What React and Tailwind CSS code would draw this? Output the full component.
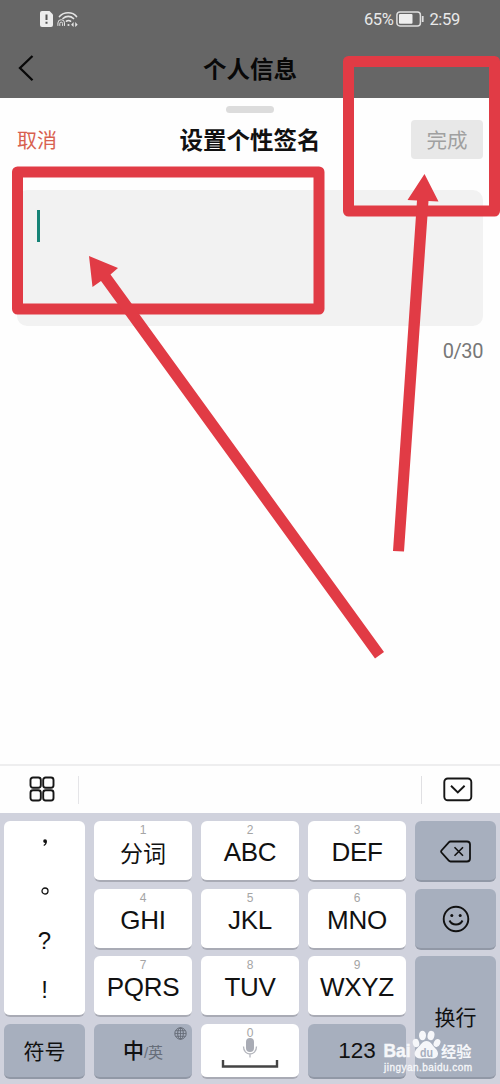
import clsx from "clsx";

const letterKeys = [
  { digit: "1", label: "分词", place: "col-start-2 row-start-1", cjk: true },
  { digit: "2", label: "ABC", place: "col-start-3 row-start-1" },
  { digit: "3", label: "DEF", place: "col-start-4 row-start-1" },
  { digit: "4", label: "GHI", place: "col-start-2 row-start-2" },
  { digit: "5", label: "JKL", place: "col-start-3 row-start-2" },
  { digit: "6", label: "MNO", place: "col-start-4 row-start-2" },
  { digit: "7", label: "PQRS", place: "col-start-2 row-start-3" },
  { digit: "8", label: "TUV", place: "col-start-3 row-start-3" },
  { digit: "9", label: "WXYZ", place: "col-start-4 row-start-3" },
];

function Key({ dark, className, children }) {
  return (
    <button
      className={clsx(
        "rounded-md border-b-2 flex",
        dark ? "bg-[#a7afbe] border-[#9198a6]" : "bg-white border-[#a9abb5]",
        className
      )}
    >
      {children}
    </button>
  );
}

function StatusBar() {
  return (
    <div className="h-[38px] pl-10 pr-10 flex items-center justify-between text-[#e9e9e9]">
      <div className="flex items-center gap-1">
        <svg width="13" height="16" viewBox="0 0 13 16">
          <path d="M2 0h7.5L13 3.5V14a2 2 0 0 1-2 2H2a2 2 0 0 1-2-2V2a2 2 0 0 1 2-2z" fill="#ececec" />
          <path d="M6.5 3.5v5.5M6.5 10.800v2" stroke="#555" strokeWidth="2" />
        </svg>
        <svg width="21" height="17" viewBox="0 0 21 17" fill="none" stroke="#e4e4e4" strokeLinecap="round">
          <path d="M2.500 5.500C7 .500 15.500 .500 19.500 5.500" strokeWidth="1.700" />
          <path d="M6 7.500C9 4.700 13.500 4.700 16.500 7.500" strokeWidth="1.700" />
          <path d="M9.500 10.200c1-.9 3-.9 4 0" strokeWidth="1.700" />
          <circle cx="11.500" cy="14" r="1.100" fill="#e4e4e4" stroke="none" />
          <path d="M.9 14.500v-2.500a3.300 3.300 0 0 1 6.600 0v2.500M2.800 14.500v-2a1.400 1.400 0 0 1 2.800 0v2" strokeWidth="1" />
          <path d="M16.600 11l-2.500 2.700 2.500 2.200zM18.200 11l2.500 2.700-2.500 2.200z" fill="#e4e4e4" stroke="none" />
        </svg>
      </div>
      <div className="flex items-center font-[Roboto,sans-serif] text-[16.5px] leading-5">
        <span className="tracking-[-0.4px] pt-px">65%</span>
        <svg width="28" height="16" viewBox="0 0 28 16" className="ml-[3px] mr-[5px]">
          <rect x=".9" y=".9" width="23.500" height="14" rx="3" fill="none" stroke="#dedede" strokeWidth="1.500" />
          <rect x="3" y="3" width="13.500" height="9.800" rx="1" fill="#eee" />
          <path d="M26.700 5v6" stroke="#dedede" strokeWidth="1.800" />
        </svg>
        <span className="tracking-[-0.3px] pt-px">2:59</span>
      </div>
    </div>
  );
}

function SignatureSheet() {
  return (
    <div className="h-[666px] bg-[#fefefe] px-[17px] flex flex-col">
      <div className="mt-2 h-[7px] w-12 rounded-sm bg-[#dcdcdc] self-center" />
      <div className="mt-[7px] h-[39px] grid grid-cols-[1fr_auto_1fr] items-center">
        <span className="pt-[3px] text-[20px] text-[#d8604f]">取消</span>
        <h2 className="pt-[5px] text-[23.500px] font-bold text-[#111] leading-none">设置个性签名</h2>
        <button className="justify-self-end w-[72px] h-[39px] pt-[3px] rounded-sm bg-[#e8e8e8] text-[20.500px] text-[#a0a0a0]">
          完成
        </button>
      </div>
      <div className="mt-[31px] h-[136px] rounded-[10px] bg-[#f2f2f2] pl-[20px] pt-5">
        <div className="w-[3px] h-8 bg-[#168377]" />
      </div>
      <div className="mt-[11px] text-right font-[Roboto,sans-serif] text-[20px] leading-7 tracking-[-0.4px] text-[#777]">0/30</div>
    </div>
  );
}

function Toolbar() {
  return (
    <div className="h-[49px] border-t-2 border-[#eeeeef] bg-[#fefefe] flex items-center justify-between">
      <div className="w-[79px] h-7 border-r border-[#e5e5e8] flex items-center pl-[29px]">
        <svg width="26" height="26" viewBox="0 0 26 26" fill="none" stroke="#161616" strokeWidth="1.900" className="-mt-px">
          <rect x="1.500" y="1.500" width="10.300" height="10.300" rx="2.500" />
          <rect x="14.200" y="1.500" width="10.300" height="10.300" rx="2.500" />
          <rect x="1.500" y="14.200" width="10.300" height="10.300" rx="2.500" />
          <rect x="14.200" y="14.200" width="10.300" height="10.300" rx="2.500" />
        </svg>
      </div>
      <div className="w-[79px] h-7 border-l border-[#e0e0e3] flex items-center pl-[21px]">
        <svg width="30" height="25" viewBox="0 0 30 25" fill="none" stroke="#161616" strokeWidth="1.900" className="-mt-px">
          <rect x="1.300" y="1.500" width="27" height="21.800" rx="3.500" />
          <path d="M8 8.800l6.800 6.700 6.800-6.700" />
        </svg>
      </div>
    </div>
  );
}

function Keyboard() {
  return (
    <div className="h-[271px] bg-[#d0d2dd] pt-2 px-1">
      <div className="grid grid-cols-[81px_98px_98px_98px_81px] grid-rows-[61px_61px_61px_55px] gap-x-[9px] gap-y-[6.500px] text-[#111]">
        <Key className="col-start-1 row-start-1 row-span-3 flex-col items-center">
          <svg width="10" height="12" viewBox="0 0 10 12" className="mt-[16px]">
            <path d="M5 2.200a2 2 0 0 1 2 2c0 2.300-1.200 3.900-3 4.700l-.5-.9c1-.5 1.600-1.200 1.700-2A1.900 1.900 0 0 1 5 2.200z" fill="#111" />
          </svg>
          <svg width="10" height="10" viewBox="0 0 10 10" className="mt-[37px]">
            <circle cx="5" cy="5" r="3" fill="none" stroke="#111" strokeWidth="1.300" />
          </svg>
          <span className="mt-[31px] text-[24px] leading-7">?</span>
          <span className="mt-[21px] text-[24px] leading-7">!</span>
        </Key>
        {letterKeys.map((key) => (
          <Key key={key.digit} className={clsx("flex-col items-center", key.place)}>
            <span className="mt-[3px] text-[12px] leading-3 text-[#a5a5a5]">{key.digit}</span>
            <span className={clsx("leading-[28px]", key.cjk ? "mt-[4px] text-[23px]" : "mt-[2px] text-[26px] tracking-[-0.3px]")}>
              {key.label}
            </span>
          </Key>
        ))}
        <Key dark className="col-start-5 row-start-1 items-center justify-center">
          <svg width="32" height="24" viewBox="0 0 32 24" fill="none" stroke="#111" strokeWidth="1.800" className="mt-[3px]">
            <path d="M10.500 1.500h16.500a3 3 0 0 1 3 3v14a3 3 0 0 1-3 3H10.500q-1 0-1.700-.8L1.500 12.500q-.8-1 0-2L8.800 2.300q.7-.8 1.700-.8z" />
            <path d="M14.500 7.300l8.500 8.500M23 7.300l-8.500 8.500" strokeWidth="1.600" />
          </svg>
        </Key>
        <Key dark className="col-start-5 row-start-2 items-center justify-center">
          <svg width="28" height="28" viewBox="0 0 28 28" fill="none" stroke="#111" strokeWidth="1.900" className="mt-px">
            <circle cx="14" cy="14" r="12.300" />
            <circle cx="9.800" cy="10.500" r="1.500" fill="#111" stroke="none" />
            <circle cx="18.200" cy="10.500" r="1.500" fill="#111" stroke="none" />
            <path d="M7.500 15.500c2.500 5.300 10.500 5.300 13 0" />
          </svg>
        </Key>
        <Key dark className="col-start-5 row-start-3 row-span-2 justify-center">
          <span className="mt-[48px] text-[21px] leading-7">换行</span>
        </Key>
        <Key dark className="col-start-1 row-start-4 items-center justify-center pt-[3px] text-[21px]">符号</Key>
        <Key dark className="relative col-start-2 row-start-4 items-center justify-center pt-[2px]">
          <span className="text-[21px] font-medium">中</span>
          <span className="mt-[5px] text-[15px] text-[#666d79]">/英</span>
          <svg width="13" height="13" viewBox="0 0 13 13" fill="none" stroke="#626873" className="absolute right-[5px] top-[3px]">
            <circle cx="6.500" cy="6.500" r="5.700" />
            <ellipse cx="6.500" cy="6.500" rx="2.800" ry="5.700" />
            <path d="M6.500 1v11M1 6.500h11M1.800 3.700h9.400M1.800 9.300h9.400" strokeWidth=".8" />
          </svg>
        </Key>
        <Key className="col-start-3 row-start-4 flex-col items-center">
          <span className="mt-[3px] text-[12px] leading-3 text-[#a5a5a5]">0</span>
          <svg width="60" height="34" viewBox="0 0 60 34" fill="none" className="-mt-1">
            <rect x="26" y="3" width="8" height="14" rx="4" fill="#a9acb5" />
            <path d="M23.500 11.500c0 10 13 10 13 0M30 19v3.500" stroke="#b4b6bd" strokeWidth="1.300" />
            <path d="M3 25v6.500h54V25" stroke="#444" strokeWidth="2.400" />
          </svg>
        </Key>
        <Key dark className="col-start-4 row-start-4 items-center justify-center pt-[2px] text-[22.500px]">123</Key>
      </div>
    </div>
  );
}

// red boxes and arrows drawn on top of the screen
function Annotations() {
  return (
    <svg width="500" height="1084" viewBox="0 0 500 1084" className="absolute inset-0 pointer-events-none">
      <g fill="none" stroke="#e13b45" strokeWidth="11" strokeLinejoin="round">
        <rect x="17.500" y="172" width="301.500" height="137" />
        <rect x="348.500" y="61.500" width="146" height="149.500" />
      </g>
      <g fill="#e13b45">
        <path d="M89 256l29 12-7.500 6.500L384 652l-9 6.500L101 281l-8.500 6z" />
        <path d="M424.500 174l14 27.500-10-.5L404 551.500l-11-.5L417 200.500l-9.500-.5z" />
      </g>
    </svg>
  );
}

function Watermark() {
  return (
    <svg width="100" height="48" viewBox="0 0 100 48" fill="#f6f7fa" className="absolute left-[380px] top-[1028px] pointer-events-none">
      <text x="3.500" y="29" fontSize="19" fontWeight="bold" stroke="#f6f7fa" strokeWidth=".5" textLength="27" lengthAdjust="spacingAndGlyphs">Bai</text>
      <ellipse cx="36" cy="15" rx="3.200" ry="4.200" transform="rotate(-15 36 15)" />
      <ellipse cx="42.500" cy="7.500" rx="3.500" ry="4.800" />
      <ellipse cx="51" cy="7.500" rx="3.400" ry="4.700" transform="rotate(12 51 7.500)" />
      <ellipse cx="57" cy="15" rx="3.200" ry="4.100" transform="rotate(25 57 15)" />
      <path d="M46.500 13c4.500 0 5.500 4 8.500 7 5.500 5 3 11-3.200 10.500-3.300-.3-7.300-.3-10.600 0-6.500.5-9-5.500-3.700-10.500 3.500-3 4.500-7 9-7z" />
      <text x="40" y="28.500" fontSize="12" fontWeight="bold" fill="#a7afbe" textLength="13" lengthAdjust="spacingAndGlyphs">du</text>
      <text x="61" y="28.500" fontSize="15.200" fontWeight="bold">经验</text>
      <text x="4" y="43" fontSize="10" stroke="#f6f7fa" strokeWidth=".3" textLength="88">jingyan.baidu.com</text>
    </svg>
  );
}

export default function App() {
  return (
    <div className="relative w-[500px] h-[1084px] overflow-hidden bg-white font-['Liberation_Sans','Noto_Sans_CJK_SC',sans-serif]">
      <header className="h-[98px] bg-[#666]">
        <StatusBar />
        <div className="h-[60px] grid grid-cols-[1fr_auto_1fr] items-center">
          <svg width="16" height="28" viewBox="0 0 16 28" fill="none" stroke="#080808" strokeWidth="2.300" className="ml-[18px]">
            <path d="M14.500 2L2 14l12.500 12.300" />
          </svg>
          <h1 className="pt-[6px] text-[23.500px] font-bold leading-none text-[#080808]">个人信息</h1>
        </div>
      </header>
      <SignatureSheet />
      <Toolbar />
      <Keyboard />
      <Annotations />
      <Watermark />
    </div>
  );
}
